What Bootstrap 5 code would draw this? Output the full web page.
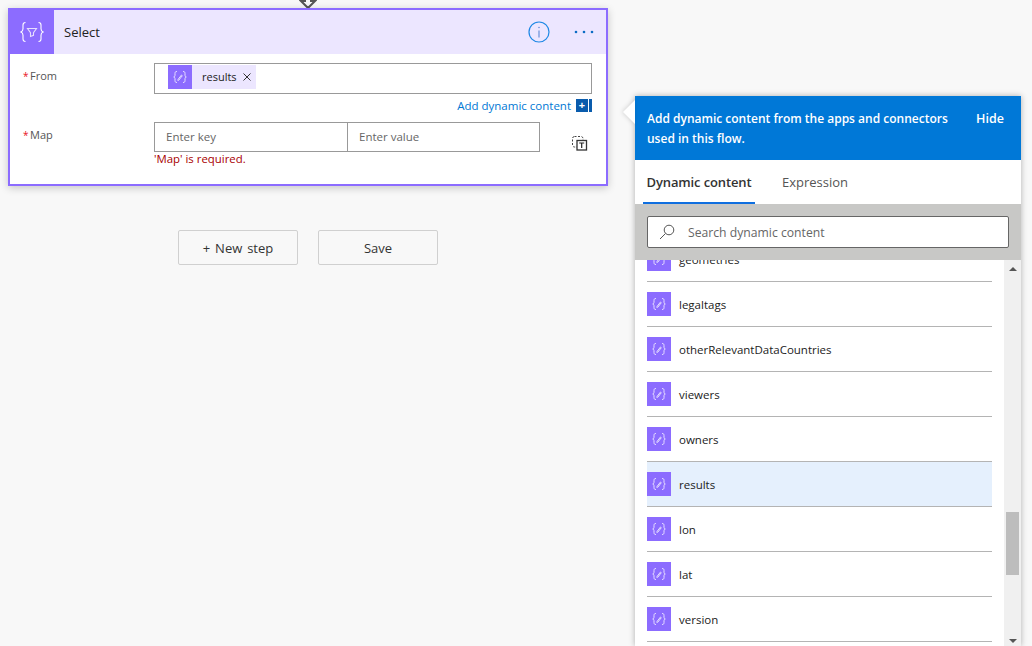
<!DOCTYPE html>
<html lang="en"><head><meta charset="utf-8"><title>Select</title>
<link href="https://cdn.jsdelivr.net/npm/bootstrap@5.3.0/dist/css/bootstrap.min.css" rel="stylesheet">
<style>
html,body{height:100%;overflow:hidden}
body{background:#f8f8f8;font-family:"Open Sans","Noto Sans",sans-serif;font-size:12px;color:#333;position:relative;margin:0}
.flow-col{width:600px;margin-left:8px}
.top-arrow{height:8px;display:block;margin:0 auto}
.step-card{border:2px solid #8c6cff;border-radius:0;box-shadow:0 2px 8px rgba(0,0,0,.2);height:178px;background:#fff}
.step-head{height:44px;background:#ece6ff;font-size:13px;color:#222}
.step-tile{width:44px;height:44px;background:#8c6cff}
.step-title{margin-left:10px;padding-top:1px}
.step-info{margin-left:auto}
.step-dots{margin:0 12px 0 24px}
.step-body{padding:9px 14px 0 13px;position:relative}
.field-label{width:131px;padding-top:5px;color:#555;font-size:11px}
.req{color:#e81123;display:inline-block;width:7px;font-size:10px}
.tok-box{width:438px;height:31px;border:1px solid #999;padding:1px 13px;background:#fff}
.chip{height:24px;width:88px;background:#ece6ff;color:#222;font-size:11px}
.chip-ico{width:24px;height:24px;background:#8c6cff;margin-right:10px}
.chip-x{margin-left:6px;line-height:0}
.dyn-row{height:28px;padding-top:5px;width:569px;color:#0078d4;font-size:11.5px;line-height:13px;gap:5px}
.dyn-plus{width:12px;height:13px;background:#0a5cad;color:#fff;font-size:11px;line-height:12px;text-align:center;font-weight:700}
.dyn-bar{width:3px;height:13px;background:#0a5cad;margin-left:-4px}
.map-box{width:386px;height:30px;border:1px solid #999;background:#fff}
.map-cell{flex:1 1 50%;padding:0 11px;color:#666;font-size:11.5px;line-height:28px}
.map-cell+.map-cell{border-left:1px solid #999}
.map-err{color:#a80000;font-size:11.4px;margin-top:-1px;line-height:15px}
.del-ico{margin:14px 0 0 32px;display:block}
.act-row{margin-top:44px;gap:20px;justify-content:center}
.act-btn{width:120px;height:35px;border:1px solid #d0d0d0;border-radius:2px;background:#f8f8f8;color:#333;font-size:13px;padding:1px 0 0;line-height:33px}
.word-wide{word-spacing:1.500px}
.dyn-panel{position:absolute;left:635px;top:96px;width:386px;height:550px;background:#fff;box-shadow:0 0 6px rgba(0,0,0,.3);display:flex;flex-direction:column}
.dyn-caret{position:absolute;left:-12px;top:4px;width:0;height:0;border-style:solid;border-width:12px 12px 12px 0;border-color:transparent #fff transparent transparent;filter:drop-shadow(-1px 0 2px rgba(0,0,0,.15))}
.dyn-head{height:64px;background:#0078d7;color:#fff;font-size:12px;line-height:20px;padding:13px 12px 0 12px;font-weight:600}
.dyn-head-text{width:316px}
.dyn-hide{margin-left:13px;font-size:12.500px}
.dyn-tabs{height:44px;padding-left:8px;gap:20px;font-size:13px}
.dyn-tab{padding:0;height:44px;line-height:44px;color:#555}
.dyn-tab-on{color:#333;font-weight:600;border-bottom:2px solid #0f6fe0;width:112px;text-align:center;font-size:13px;letter-spacing:-.01em}
.dyn-tab-off{padding-left:7px}
.dyn-search{height:56px;background:#c8c8c6;padding:12px;flex:none;position:relative;z-index:2}
.dyn-sbox{height:32px;background:#fff;border:1px solid #666;border-radius:2px;padding-left:11px;color:#666;font-size:12.200px;gap:13px}
.dyn-sbox span{padding-top:2px}
.dyn-listwrap{flex:1 1 auto;min-height:0;overflow:hidden;position:relative}
.dyn-list{margin:-23px 29px 0 12px;list-style:none;padding:0}
.dyn-item{height:45px;padding-top:10px;border-bottom:1px solid #b4b4b4;font-size:11.5px;line-height:26px;color:#222;gap:8px}
.dyn-item-on{background:#e5f0fd}
.dyn-ico{width:24px;height:24px;background:#8c6cff;flex:none}
.dyn-scroll{position:absolute;right:0;top:0;bottom:0;width:17px;background:#f0f0f0}
.dyn-thumb{position:absolute;left:2px;top:252px;width:13px;height:63px;background:#bdbdbd}
.dyn-up{position:absolute;left:5px;top:7px;width:0;height:0;border-style:solid;border-width:0 4px 4px;border-color:transparent transparent #555}
.dyn-down{position:absolute;left:5px;bottom:3px;width:0;height:0;border-style:solid;border-width:4px 4px 0;border-color:#555 transparent transparent}
</style></head><body>
<svg width="0" height="0" class="position-absolute"><defs>
<symbol id="exprico" viewBox="0 0 24 24"><g fill="none" stroke="#e6deff" stroke-width="1"><path d="M9 6.500c-1.800 0-2 .8-2 2v1.800c0 1-.5 1.500-1.300 1.700.8.200 1.300.7 1.300 1.700v1.800c0 1.200.2 2 2 2"/><path d="M15 6.500c1.800 0 2 .8 2 2v1.800c0 1 .5 1.500 1.300 1.700-.8.200-1.300.7-1.300 1.700v1.800c0 1.200-.2 2-2 2"/><path d="M10 14.500l3.500-4.500 .8.700-3.500 4.500-1 .2z"/></g></symbol>
</defs></svg>
<div class="flow-col">
<svg class="top-arrow" width="18" height="8" viewBox="0 0 18 8"><path d="M6 -2h6v3h4L9 8 2 1h4z" fill="none" stroke="#555" stroke-width="2"/></svg>
<div class="step-card card">
<div class="step-head d-flex align-items-center">
<div class="step-tile d-flex align-items-center justify-content-center">
<svg width="24" height="24" viewBox="0 0 24 24" fill="none" stroke="#fff" stroke-width="1.100"><path d="M5.500 2.500c-2.300 0-2.500 1-2.500 2.500v3.800c0 1.600-.6 2.600-2 3.200 1.400.6 2 1.600 2 3.200V19c0 1.500.2 2.500 2.500 2.500"/><path d="M18.500 2.500c2.300 0 2.500 1 2.500 2.500v3.800c0 1.600.6 2.600 2 3.200-1.400.6-2 1.600-2 3.200V19c0 1.500-.2 2.500-2.500 2.500"/><path d="M7.500 8.500h9l-3 4.200v2.600l-3 1.200v-3.800z" stroke="#e6deff"/></svg>
</div>
<span class="step-title">Select</span>
<svg class="step-info" width="22" height="22" viewBox="0 0 22 22" fill="none" stroke="#1e88e5"><circle cx="11" cy="11" r="10" stroke-width="1.200"/><path d="M11 9.500v7" stroke="#6a8fd8" stroke-width="1.200"/><circle cx="11" cy="6.500" r=".8" fill="#6a8fd8" stroke="none"/></svg>
<svg class="step-dots" width="20" height="4" viewBox="0 0 20 4" fill="#0a6cc4"><circle cx="2" cy="2" r="1.300"/><circle cx="10" cy="2" r="1.300"/><circle cx="18" cy="2" r="1.300"/></svg>
</div>
<div class="step-body">
<div class="d-flex">
<div class="field-label"><span class="req">*</span>From</div>
<div class="tok-box"><div class="chip d-flex align-items-center"><svg class="chip-ico" viewBox="0 0 24 24"><use href="#exprico"/></svg>results<span class="chip-x"><svg width="8" height="8" viewBox="0 0 8 8" stroke="#333" stroke-width="1"><path d="M.5.500l7 7M7.500.500l-7 7"/></svg></span></div></div>
</div>
<div class="dyn-row d-flex align-items-start justify-content-end"><span>Add dynamic content</span><span class="dyn-plus">+</span><span class="dyn-bar"></span></div>
<div class="d-flex">
<div class="field-label"><span class="req">*</span>Map</div>
<div>
<div class="map-box d-flex"><div class="map-cell">Enter key</div><div class="map-cell">Enter value</div></div>
<div class="map-err">'Map' is required.</div>
</div>
<svg class="del-ico" width="16" height="16" viewBox="0 0 16 16" fill="none"><rect x=".5" y=".5" width="10.500" height="10.500" rx="2" stroke="#444" stroke-dasharray="2 1.500"/><rect x="5" y="4.500" width="9.500" height="9.500" fill="#fff" stroke="#333" stroke-width="1.300"/><path d="M7.200 7h5M9.700 7v5" stroke="#222" stroke-width="1.200"/></svg>
</div>
</div>
</div>
<div class="act-row d-flex">
<button class="btn act-btn word-wide" type="button">+ New step</button>
<button class="btn act-btn" type="button">Save</button>
</div>
</div>
<aside class="dyn-panel">
<span class="dyn-caret"></span>
<div class="dyn-head d-flex"><div class="dyn-head-text">Add dynamic content from the apps and connectors used in this flow.</div><div class="dyn-hide">Hide</div></div>
<div class="dyn-tabs d-flex flex-none"><div class="dyn-tab dyn-tab-on">Dynamic content</div><div class="dyn-tab dyn-tab-off">Expression</div></div>
<div class="dyn-search"><div class="dyn-sbox d-flex align-items-center"><svg width="16" height="16" viewBox="0 0 16 16" fill="none" stroke="#555"><circle cx="10" cy="6" r="4.800"/><path d="M6.500 9.500L1 15"/></svg><span>Search dynamic content</span></div></div>
<div class="dyn-listwrap">
<ul class="dyn-list">
<li class="dyn-item d-flex"><svg class="dyn-ico"><use href="#exprico"/></svg><span>geometries</span></li>
<li class="dyn-item d-flex"><svg class="dyn-ico"><use href="#exprico"/></svg><span>legaltags</span></li>
<li class="dyn-item d-flex"><svg class="dyn-ico"><use href="#exprico"/></svg><span>otherRelevantDataCountries</span></li>
<li class="dyn-item d-flex"><svg class="dyn-ico"><use href="#exprico"/></svg><span>viewers</span></li>
<li class="dyn-item d-flex"><svg class="dyn-ico"><use href="#exprico"/></svg><span>owners</span></li>
<li class="dyn-item dyn-item-on d-flex"><svg class="dyn-ico"><use href="#exprico"/></svg><span>results</span></li>
<li class="dyn-item d-flex"><svg class="dyn-ico"><use href="#exprico"/></svg><span>lon</span></li>
<li class="dyn-item d-flex"><svg class="dyn-ico"><use href="#exprico"/></svg><span>lat</span></li>
<li class="dyn-item d-flex"><svg class="dyn-ico"><use href="#exprico"/></svg><span>version</span></li>
</ul>
<div class="dyn-scroll"><span class="dyn-up"></span><span class="dyn-thumb"></span><span class="dyn-down"></span></div>
</div>
</aside>
</body></html>
